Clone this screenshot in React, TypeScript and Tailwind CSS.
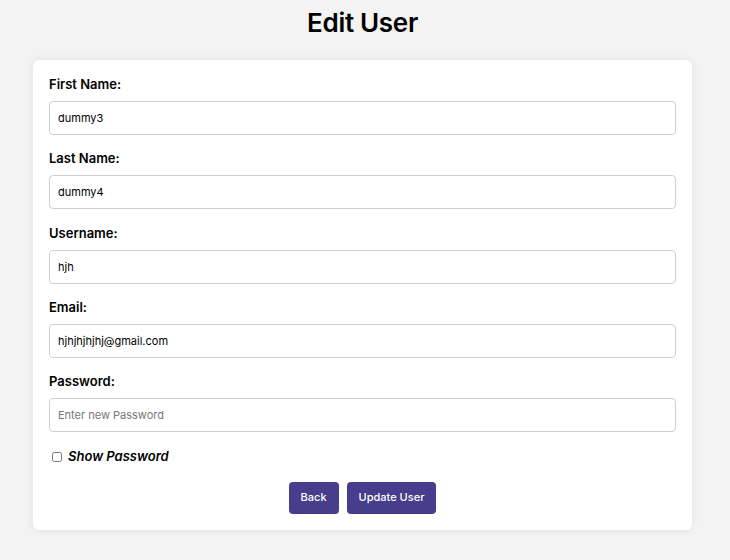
import { useState } from "react";

const fields = [
  { label: "First Name:", value: "dummy3", type: "text" },
  { label: "Last Name:", value: "dummy4", type: "text" },
  { label: "Username:", value: "hjh", type: "text" },
  { label: "Email:", value: "hjhjhjhjhj@gmail.com", type: "email" },
];

export default function App() {
  const [show, setShow] = useState(false);

  return (
    <div className="min-h-[560px] bg-[#f3f3f3] pt-[7px]" style={{ fontFamily: "Inter, sans-serif" }}>
      <div className="ml-[33px] w-[659px]">
        <h1 className="text-center text-[26px] leading-[32px] font-semibold text-black tracking-[-0.3px]">
          Edit User
        </h1>

        <form className="mt-[21px] bg-white rounded-[6px] shadow-[0_0_8px_rgba(0,0,0,0.08)] px-4 pt-[16px] pb-4">
          {fields.map((f) => (
            <div key={f.label} className="mb-[15.25px]">
              <label className="block text-[13px] leading-[16px] font-semibold text-black mb-[9px]">
                {f.label}
              </label>
              <input
                type={f.type}
                defaultValue={f.value}
                className="w-full h-[34px] px-2 border border-[#cfcfcf] rounded-[4px] text-[11px] text-black outline-none"
              />
            </div>
          ))}

          <div className="mb-[15px]">
            <label className="block text-[13px] leading-[16px] font-semibold text-black mb-[9px]">
              Password:
            </label>
            <input
              type={show ? "text" : "password"}
              placeholder="Enter new Password"
              className="w-full h-[34px] px-2 border border-[#cfcfcf] rounded-[4px] text-[11px] text-black placeholder:text-[#777] outline-none"
            />
          </div>

          <div className="flex items-center gap-[6px] pl-[3px]">
            <input
              type="checkbox"
              checked={show}
              onChange={() => setShow(!show)}
              className="w-[10px] h-[10px] m-0"
            />
            <span className="text-[13px] italic font-semibold text-black">Show Password</span>
          </div>

          <div className="flex justify-center gap-2 mt-[15px]">
            <button type="button" className="h-8 px-3 rounded-[4px] bg-[#463d8c] text-white text-[11px] font-medium">
              Back
            </button>
            <button type="submit" className="h-8 px-3 rounded-[4px] bg-[#463d8c] text-white text-[11px] font-medium">
              Update User
            </button>
          </div>
        </form>
      </div>
    </div>
  );
}
